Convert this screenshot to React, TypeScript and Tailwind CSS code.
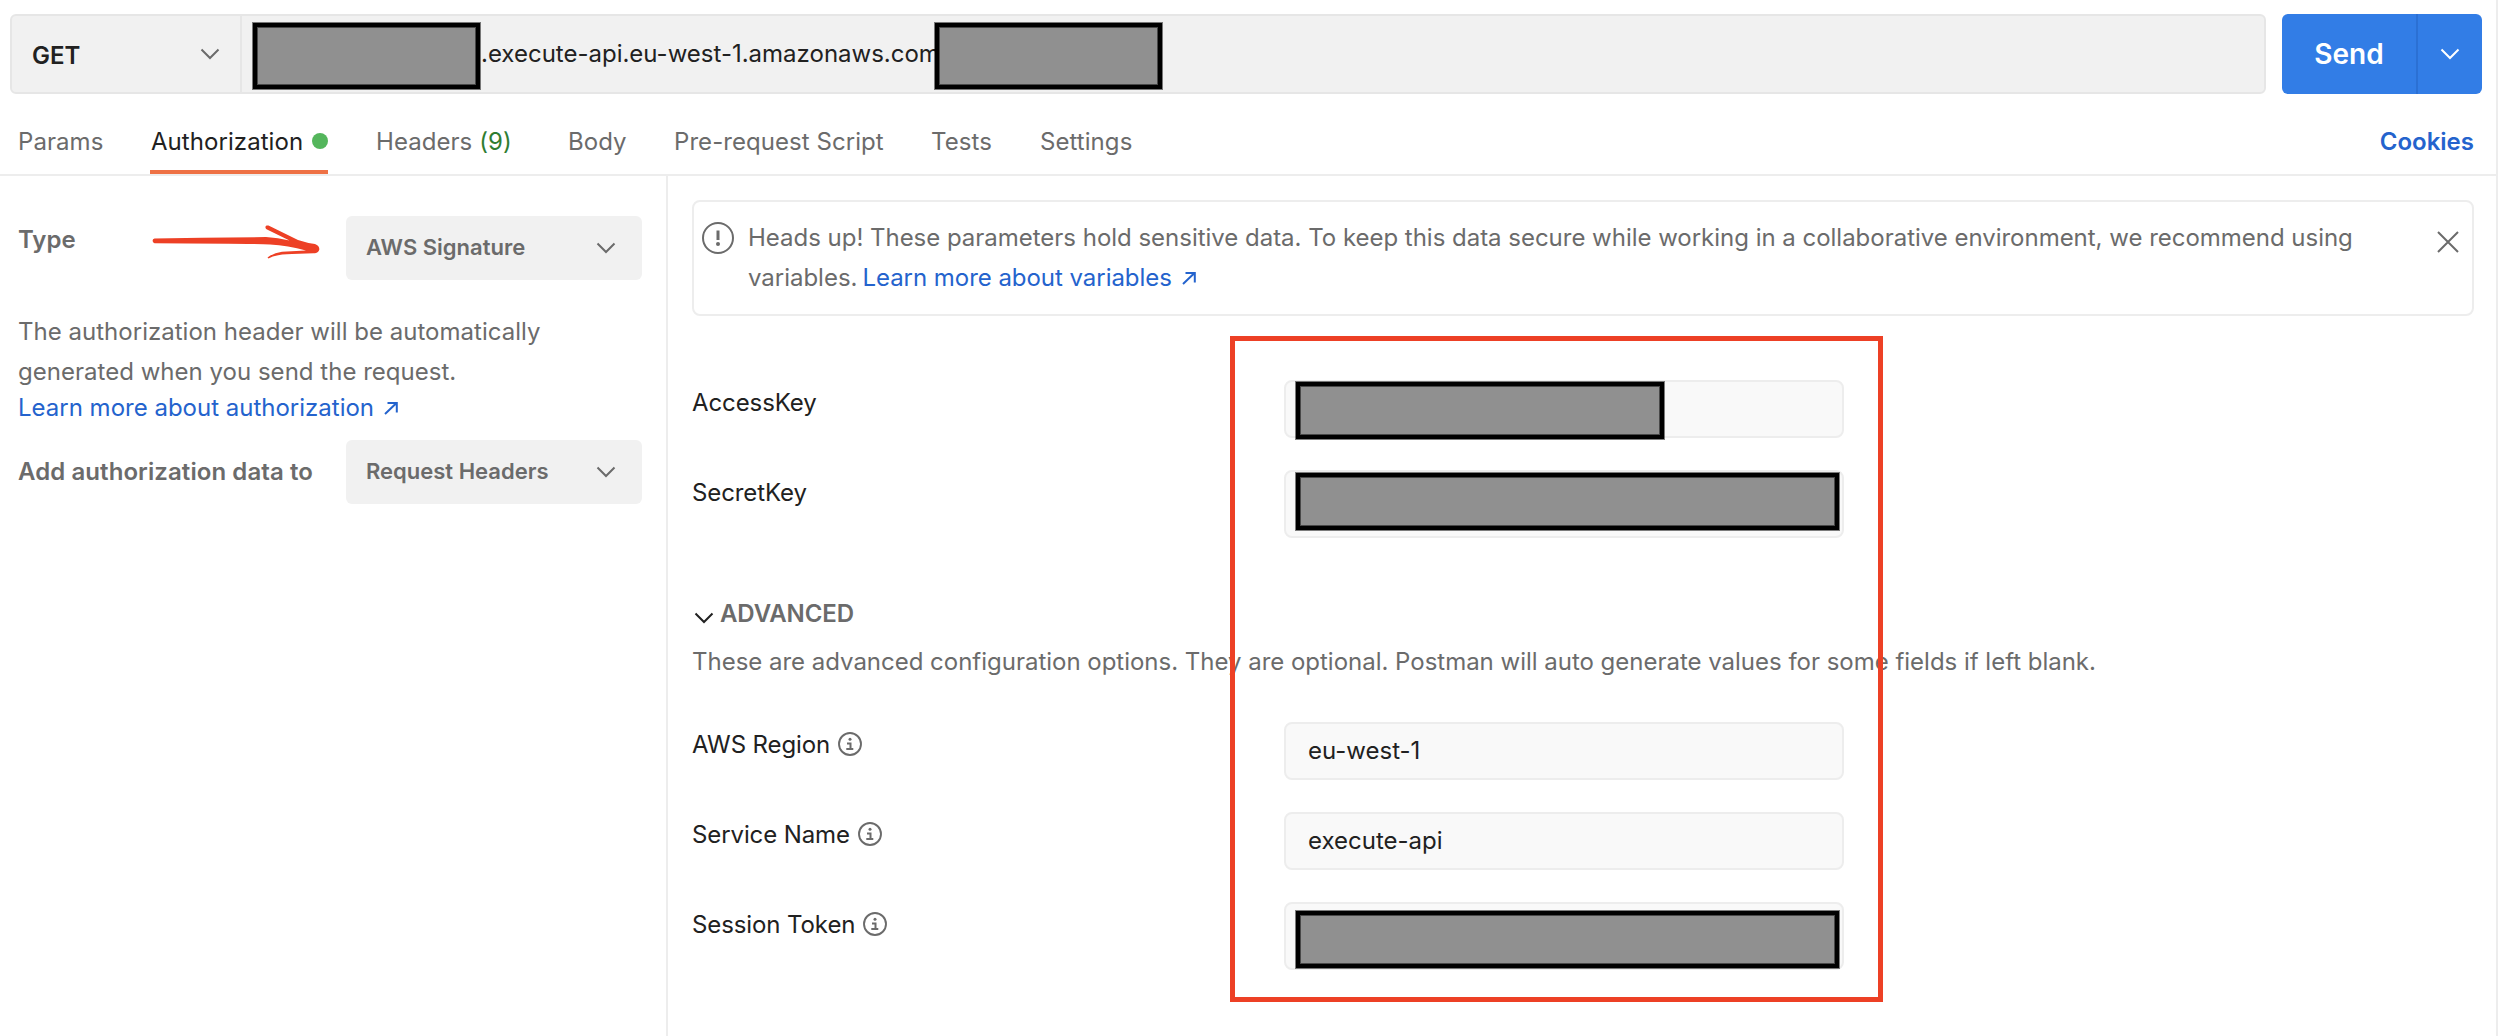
import React from "react";

function Chevron({ className = "" }: { className?: string }) {
  return (
    <svg width="20" height="12" viewBox="0 0 20 12" fill="none" stroke="currentColor" strokeWidth="2" className={className}>
      <path d="M1.5 1.5 10 10l8.500-8.500" />
    </svg>
  );
}

function LinkArrow({ className = "" }: { className?: string }) {
  return (
    <svg width="14" height="14" viewBox="0 0 14 14" fill="none" stroke="currentColor" strokeWidth="2" className={className}>
      <path d="M1 13 12.500 2M3.500 2h9.300v9.500" />
    </svg>
  );
}

function InfoIcon() {
  return (
    <svg width="24" height="24" viewBox="0 0 24 24" fill="none" stroke="#6b6b6b" strokeWidth="1.900">
      <circle cx="12" cy="12" r="11" />
      <path d="M9 11.500h3.500V17M8.300 17h7" strokeWidth="2" />
      <circle cx="12" cy="7.300" r="1.500" fill="#6b6b6b" stroke="none" />
    </svg>
  );
}

function Redacted({ className = "" }: { className?: string }) {
  return (
    <div
      className={
        "absolute border-4 border-black bg-[#909090] shadow-[0_0_0_1px_rgba(0,0,0,0.5),inset_0_0_0_1px_rgba(0,0,0,0.5)] " + className
      }
    />
  );
}

function Select({ label, className = "" }: { label: string; className?: string }) {
  return (
    <div className={"flex h-16 w-[296px] items-center justify-between rounded-md bg-[#f1f1f1] pr-[26px] pl-5 text-[22px] font-semibold " + className}>
      <span className="-mt-px">{label}</span>
      <Chevron />
    </div>
  );
}

function Field({ label, info, tall, children }: { label: string; info?: boolean; tall?: boolean; children?: React.ReactNode }) {
  return (
    <div className="flex h-[90px] items-start text-[#212121]">
      <div className="flex w-[592px] items-center gap-2 pt-[3px] leading-10 tracking-[-0.1px]">
        <span>{label}</span>
        {info && (
          <span className="-mt-0.5">
            <InfoIcon />
          </span>
        )}
      </div>
      <div className={"relative flex w-[560px] items-center rounded-lg border-2 border-[#ededed] bg-[#f9f9f9] pl-[22px] " + (tall ? "h-[68px]" : "h-[58px]")}>
        {children}
      </div>
    </div>
  );
}

export default function App() {
  return (
    <div className="relative flex h-[1036px] w-[2498px] flex-col overflow-hidden border-r-2 border-[#ededed] bg-white font-['Inter',sans-serif] text-[24px] text-[#6b6b6b]">
      <div className="flex h-[108px] shrink-0 pt-3.5 pl-2.5">
        <div className="flex h-20 w-[2256px] rounded-md border-2 border-[#e6e6e6] bg-[#f1f1f1]">
          <div className="flex w-[230px] items-center justify-between border-r-2 border-[#e6e6e6] pr-5 pl-5">
            <span className="pt-1 font-semibold text-[#212121]">GET</span>
            <Chevron />
          </div>
          <div className="relative flex flex-1 items-center pl-[239px] text-[#212121]">
            <span>.execute-api.eu-west-1.amazonaws.com</span>
            <Redacted className="top-[7px] left-[11px] h-[66px] w-[227px]" />
            <Redacted className="top-[7px] left-[693px] h-[66px] w-[227px]" />
          </div>
        </div>
        <div className="ml-4 flex h-20 w-[200px] rounded-md bg-[#327de6] text-white">
          <div className="flex w-[136px] items-center justify-center border-r-2 border-[#2b70d4] text-[28px] font-semibold">Send</div>
          <div className="flex flex-1 items-center justify-center">
            <Chevron />
          </div>
        </div>
      </div>

      <div className="flex h-[68px] shrink-0 justify-between border-b-2 border-[#ededed] pr-[22px] pl-[18px] leading-[67px]">
        <div className="flex tracking-[0.06px]">
          <div className="w-[132px]">Params</div>
          <div className="relative flex w-[178px] items-center justify-between pl-px text-[#212121]">
            <span>Authorization</span>
            <span className="h-4 w-4 rounded-full bg-[#54b65c]" />
            <span className="absolute bottom-0 left-0 h-1 w-full bg-[#ee7145]" />
          </div>
          <div className="ml-12 w-48">
            Headers <span className="text-[#2f7d32]">(9)</span>
          </div>
          <div className="w-[106px]">Body</div>
          <div className="w-[257px]">Pre-request Script</div>
          <div className="w-[109px]">Tests</div>
          <div>Settings</div>
        </div>
        <div className="font-semibold text-[#2463cd]">Cookies</div>
      </div>

      <div className="flex flex-1">
        <aside className="w-[668px] border-r-2 border-[#ededed] pt-10 pl-[18px]">
          <div className="flex h-[96px]">
            <div className="w-[134px] pt-[3px] leading-[42px] font-semibold">Type</div>
            <svg width="170" height="36" viewBox="0 0 170 36" className="mt-2 mr-6 shrink-0" fill="#ed4025">
              <path d="M2.500 14.500 50 13.800 114 13Q126 13.500 137.500 16.500L115 5.500C112 3.500 113.500.500 117.500 2L146 16Q155 19 163 20C169 22 169 29 161.500 29.300L140 30Q124 30 116.500 34.500L115.500 33.500Q122 28.500 130 27.700L154 26.500Q136 21.500 118 20.500 98 19.500 2.500 19.200A2.400 2.400 0 0 1 2.500 14.500Z" />
            </svg>
            <Select label="AWS Signature" />
          </div>
          <p className="leading-10 tracking-[0.02px]">
            The authorization header will be automatically
            <br />
            generated when you send the request.
          </p>
          <div className="flex h-8 items-center gap-2.5 text-[#2463cd]">
            <span>Learn more about authorization</span>
            <LinkArrow />
          </div>
          <div className="mt-4 flex items-center">
            <div className="w-[328px] font-semibold tracking-[0.08px]">Add authorization data to</div>
            <Select label="Request Headers" />
          </div>
        </aside>

        <main className="relative flex-1 pt-6 pl-6">
          <div className="flex h-[116px] w-[1782px] rounded-lg border-2 border-[#ededed]">
            <svg width="32" height="32" viewBox="0 0 32 32" fill="none" stroke="#6b6b6b" strokeWidth="2" className="mt-5 ml-2 shrink-0">
              <circle cx="16" cy="16" r="15" />
              <path d="M16 8.500v9.500" strokeWidth="3" />
              <circle cx="16" cy="22" r="2" fill="#6b6b6b" stroke="none" />
            </svg>
            <div className="ml-3.5 flex-1 pt-4 leading-10 tracking-[-0.02px]">
              <div>Heads up! These parameters hold sensitive data. To keep this data secure while working in a collaborative environment, we recommend using</div>
              <div className="flex items-center">
                <span>variables.</span>
                <span className="ml-[5px] flex items-center gap-2.5 tracking-[-0.04px] text-[#2463cd]">
                  Learn more about variables <LinkArrow />
                </span>
              </div>
            </div>
            <svg width="22" height="22" viewBox="0 0 22 22" stroke="#6b6b6b" strokeWidth="2" className="mt-[29px] mr-[13px] shrink-0">
              <path d="m1 1 20 20M21 1 1 21" />
            </svg>
          </div>

          <div className="mt-16">
            <Field label="AccessKey">
              <Redacted className="top-0 left-[10px] h-[57px] w-[368px]" />
            </Field>
            <Field label="SecretKey" tall>
              <Redacted className="top-px left-[10px] h-[57px] w-[543px]" />
            </Field>
          </div>
          <div className="mt-[34px] flex h-10 items-center">
            <Chevron className="mt-2 ml-0.5 text-[#212121]" />
            <span className="ml-1.5 font-semibold tracking-[-0.1px]">ADVANCED</span>
          </div>
          <div className="mt-2 mb-10 leading-10 tracking-[-0.015px]">
            These are advanced configuration options. They are optional. Postman will auto generate values for some fields if left blank.
          </div>
          <Field label="AWS Region" info>
            eu-west-1
          </Field>
          <Field label="Service Name" info>
            execute-api
          </Field>
          <Field label="Session Token" info tall>
            <Redacted className="top-[7px] left-[10px] h-[57px] w-[543px]" />
          </Field>
          <div className="absolute top-40 left-[562px] h-[666px] w-[653px] border-[5px] border-[#ed4025]" />
        </main>
      </div>
    </div>
  );
}
